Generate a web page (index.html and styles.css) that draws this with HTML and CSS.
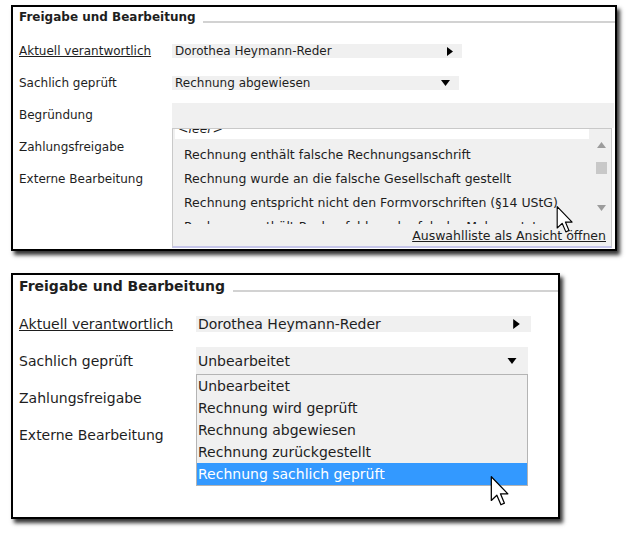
FILE: index.html
```html
<!DOCTYPE html>
<html>
<head>
   <title>Freigabe und Bearbeitung</title>
   <link rel="stylesheet" href="styles.css">
</head>
<body>
   <div class="shots">
       <section class="panel panel-small">
           <div class="panel-head">
               <h2 class="panel-title">Freigabe und Bearbeitung</h2>
               <div class="head-rule"></div>
           </div>

           <div class="form-grid">
               <a class="field-label link-label">Aktuell verantwortlich</a>
               <div class="field field-narrow">
                   <span>Dorothea Heymann-Reder</span>
                   <svg class="caret" width="6" height="9" viewBox="0 0 6 9"><path d="M0 0 L6 4.5 L0 9 Z"/></svg>
               </div>

               <span class="field-label">Sachlich geprüft</span>
               <div class="field field-short">
                   <span>Rechnung abgewiesen</span>
                   <svg class="caret" width="9" height="6" viewBox="0 0 9 6"><path d="M0 0 L9 0 L4.5 6 Z"/></svg>
               </div>

               <span class="field-label">Begründung</span>
               <div class="field field-wide">
                   <div class="popup">
                       <div class="popup-body">
                           <div class="option-list">
                               <div class="option option-empty">&lt;leer&gt;</div>
                               <div class="option">Rechnung enthält falsche Rechnungsanschrift</div>
                               <div class="option">Rechnung wurde an die falsche Gesellschaft gestellt</div>
                               <div class="option">Rechnung entspricht nicht den Formvorschriften (§14 UStG)</div>
                               <div class="option">Rechnung enthält Rechenfehler oder falsche Mehrwertsteuer</div>
                           </div>
                           <div class="scrollbar">
                               <svg width="9" height="6" viewBox="0 0 9 6"><path d="M0 6 L4.5 0 L9 6 Z"/></svg>
                               <div class="scroll-thumb"></div>
                               <svg width="9" height="6" viewBox="0 0 9 6"><path d="M0 0 L9 0 L4.5 6 Z"/></svg>
                           </div>
                       </div>
                       <div class="popup-foot">
                           <a class="popup-link">Auswahlliste als Ansicht öffnen</a>
                       </div>
                   </div>
               </div>

               <span class="field-label">Zahlungsfreigabe</span>
               <div></div>

               <span class="field-label">Externe Bearbeitung</span>
               <div></div>
           </div>

           <svg class="pointer pointer-top" width="18" height="27" viewBox="0 0 12 19"><path d="M0.5 0.5 L0.5 15.5 L4 12.2 L6.6 18.2 L8.8 17.2 L6.3 11.3 L11 11.3 Z"/></svg>
       </section>

       <section class="panel panel-large">
           <div class="panel-head">
               <h2 class="panel-title">Freigabe und Bearbeitung</h2>
               <div class="head-rule"></div>
           </div>

           <div class="form-grid">
               <a class="field-label link-label">Aktuell verantwortlich</a>
               <div class="field field-narrow">
                   <span>Dorothea Heymann-Reder</span>
                   <svg class="caret" width="7" height="10" viewBox="0 0 6 9"><path d="M0 0 L6 4.5 L0 9 Z"/></svg>
               </div>

               <span class="field-label">Sachlich geprüft</span>
               <div class="field field-short">
                   <span>Unbearbeitet</span>
                   <svg class="caret" width="10" height="6" viewBox="0 0 9 6"><path d="M0 0 L9 0 L4.5 6 Z"/></svg>
                   <div class="popup">
                       <div class="option">Unbearbeitet</div>
                       <div class="option">Rechnung wird geprüft</div>
                       <div class="option">Rechnung abgewiesen</div>
                       <div class="option">Rechnung zurückgestellt</div>
                       <div class="option option-selected">Rechnung sachlich geprüft</div>
                   </div>
               </div>

               <span class="field-label">Zahlungsfreigabe</span>
               <div></div>

               <span class="field-label">Externe Bearbeitung</span>
               <div></div>
           </div>

           <svg class="pointer pointer-bottom" width="20" height="30" viewBox="0 0 12 19"><path d="M0.5 0.5 L0.5 15.5 L4 12.2 L6.6 18.2 L8.8 17.2 L6.3 11.3 L11 11.3 Z"/></svg>
       </section>
   </div>
</body>
</html>
```

FILE: styles.css
```css
* {
    margin: 0;
    padding: 0;
    box-sizing: border-box;
}

body {
    font-family: 'DejaVu Sans', Verdana, sans-serif;
    background: #FFFFFF;
    color: #1E1E1E;
}

.shots {
    display: flex;
    flex-direction: column;
    gap: 22px;
    padding: 5px 0 12px 11px;
}

.panel {
    position: relative;
    background: #FFFFFF;
    border: 2px solid #000000;
    box-shadow: 3px 4px 4px rgba(0, 0, 0, 0.8);
}

.panel-head {
    display: flex;
    align-items: center;
}

.panel-title {
    font-weight: 700;
    white-space: nowrap;
}

.head-rule {
    flex: 1;
    height: 2px;
    background: #D2D2D2;
}

.form-grid {
    display: grid;
    align-items: center;
}

.field-label {
    white-space: nowrap;
}

.link-label {
    text-decoration: underline;
}

.field {
    position: relative;
    display: flex;
    align-items: center;
    justify-content: space-between;
    background: #F0F0F0;
    white-space: nowrap;
}

.caret {
    fill: #000000;
}

.popup {
    position: absolute;
    left: 0;
    top: 100%;
    background: #F0F0F0;
    white-space: nowrap;
}

.pointer {
    position: absolute;
    fill: #FFFFFF;
    stroke: #000000;
    stroke-width: 0.8;
    stroke-linejoin: round;
}

/* upper screenshot */

.panel-small {
    width: 606px;
    height: 246px;
    font-size: 12px;
}

.panel-small .panel-head {
    height: 20px;
    padding-left: 6px;
}

.panel-small .panel-title {
    font-size: 12px;
}

.panel-small .head-rule {
    margin: 9px 0 0 7px;
}

.panel-small .form-grid {
    grid-template-columns: 153px 1fr;
    grid-auto-rows: 24px;
    row-gap: 8px;
    margin-top: 12px;
    padding-left: 6px;
}

.panel-small .field {
    padding: 0 9px 0 3px;
}

.panel-small .field-narrow {
    width: 290px;
}

.panel-small .field-short {
    width: 287px;
}

.panel-small .field-wide {
    width: 442px;
    height: 25px;
    align-self: start;
}

.panel-small .popup {
    width: 440px;
    height: 120px;
    border: 1px solid #C9C9C9;
    border-bottom: 2px solid #C6C6EA;
    display: flex;
    flex-direction: column;
    font-size: 12.5px;
}

.popup-body {
    display: flex;
    height: 95px;
}

.option-list {
    flex: 1;
    overflow: hidden;
    padding-left: 2px;
    margin-right: 2px;
}

.panel-small .option {
    height: 24px;
    line-height: 24px;
    padding-left: 9px;
}

.panel-small .option:first-child {
    margin-top: -10px;
}

.panel-small .option-empty {
    height: 20px;
    line-height: 20px;
    margin-bottom: 4px;
    padding-left: 3px;
    background: #FFFFFF;
    font-style: italic;
}

.scrollbar {
    width: 20px;
    display: flex;
    flex-direction: column;
    align-items: center;
    padding: 13px 0;
    fill: #9C9C9C;
}

.scroll-thumb {
    width: 11px;
    height: 12px;
    margin: 14px 0 auto;
    background: #C8C8C8;
}

.popup-foot {
    flex: 1;
    display: flex;
    align-items: center;
    justify-content: flex-end;
    padding-right: 5px;
    background: #F0F0F0;
    position: relative;
}

.popup-link {
    text-decoration: underline;
    color: #1E1E1E;
}

.pointer-top {
    left: 543px;
    top: 199px;
}

/* lower screenshot */

.panel-large {
    width: 549px;
    height: 246px;
    font-size: 14px;
}

.panel-large .panel-head {
    height: 22px;
    padding-left: 6px;
}

.panel-large .panel-title {
    font-size: 14px;
}

.panel-large .head-rule {
    margin: 10px 0 0 8px;
}

.panel-large .form-grid {
    grid-template-columns: 177px 1fr;
    grid-auto-rows: 26px;
    row-gap: 11px;
    margin-top: 14px;
    padding-left: 6px;
}

.panel-large .field {
    padding: 0 11px 0 2px;
}

.panel-large .field-narrow {
    width: 335px;
}

.panel-large .field-short {
    width: 332px;
    height: 27px;
    align-self: end;
}

.panel-large .popup {
    width: 332px;
    border: 1px solid #B4B4B4;
}

.panel-large .option {
    height: 22px;
    line-height: 22px;
    padding-left: 1px;
}

.option-selected {
    background: #3399FF;
    color: #FFFFFF;
}

.pointer-bottom {
    left: 477px;
    top: 201px;
}
```
